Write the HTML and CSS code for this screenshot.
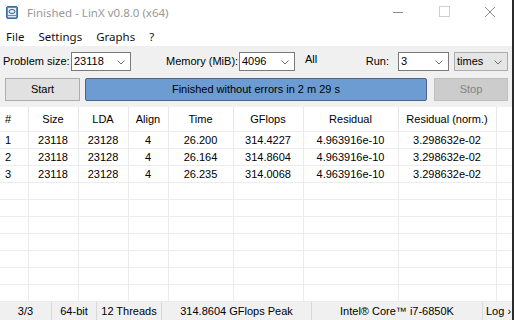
FILE: index.html
```html
<!DOCTYPE html>
<html lang="en">
<head>
  <meta charset="UTF-8">
  <title>Finished - LinX v0.8.0 (x64)</title>
  <link rel="stylesheet" href="styles.css">
</head>
<body>
  <div class="window">
    <div class="titlebar">
      <svg class="app-icon" width="12" height="13" viewBox="0 0 12 13">
        <rect x="0.5" y="0.5" width="11" height="12" rx="1.5" fill="#5d8ec4" stroke="#3b6aa0"/>
        <rect x="2" y="2" width="8" height="7" fill="#e6eef7"/>
        <ellipse cx="6" cy="5.5" rx="3" ry="2" fill="none" stroke="#2f5d93" stroke-width="1"/>
        <rect x="2" y="10" width="8" height="1.2" fill="#dbe6f2"/>
      </svg>
      <span class="title">Finished - LinX v0.8.0 (x64)</span>
      <div class="controls">
        <svg class="ctl" width="46" height="28" viewBox="0 0 46 28"><line x1="18" y1="12.5" x2="28" y2="12.5" stroke="#8a8a8a"/></svg>
        <svg class="ctl" width="46" height="28" viewBox="0 0 46 28"><rect x="18.5" y="6.5" width="10" height="10" fill="none" stroke="#cfcfcf"/></svg>
        <svg class="ctl" width="46" height="28" viewBox="0 0 46 28"><path d="M18 7 L28 17 M28 7 L18 17" stroke="#8a8a8a" stroke-width="1"/></svg>
      </div>
    </div>

    <div class="menubar">
      <span>File</span>
      <span>Settings</span>
      <span>Graphs</span>
      <span>?</span>
    </div>

    <div class="toolbar">
      <div class="row top">
        <span class="lbl lbl-size">Problem size:</span>
        <div class="combo combo-size">23118<svg class="chev" width="8" height="5" viewBox="0 0 8 5"><path d="M0.5 0.5 L4 4 L7.5 0.5" fill="none" stroke="#6f6f6f"/></svg></div>
        <span class="lbl lbl-mem">Memory (MiB):</span>
        <div class="combo combo-mem">4096<svg class="chev" width="8" height="5" viewBox="0 0 8 5"><path d="M0.5 0.5 L4 4 L7.5 0.5" fill="none" stroke="#6f6f6f"/></svg></div>
        <span class="lbl lbl-all">All</span>
        <span class="lbl lbl-run">Run:</span>
        <div class="combo combo-run">3<svg class="chev" width="8" height="5" viewBox="0 0 8 5"><path d="M0.5 0.5 L4 4 L7.5 0.5" fill="none" stroke="#6f6f6f"/></svg></div>
        <div class="combo combo-times">times<svg class="chev" width="8" height="5" viewBox="0 0 8 5"><path d="M0.5 0.5 L4 4 L7.5 0.5" fill="none" stroke="#6f6f6f"/></svg></div>
      </div>
      <div class="row bottom">
        <button class="btn btn-start">Start</button>
        <div class="progress">Finished without errors in 2 m 29 s</div>
        <button class="btn btn-stop" disabled>Stop</button>
      </div>
    </div>

    <table class="results">
      <colgroup>
        <col style="width:28px"><col style="width:50px"><col style="width:50px"><col style="width:40px">
        <col style="width:65px"><col style="width:70px"><col style="width:95px"><col style="width:98px"><col>
      </colgroup>
      <thead>
        <tr>
          <th class="num">#</th><th>Size</th><th>LDA</th><th>Align</th><th>Time</th><th>GFlops</th><th>Residual</th><th>Residual (norm.)</th><th></th>
        </tr>
      </thead>
      <tbody>
        <tr><td class="num">1</td><td>23118</td><td>23128</td><td>4</td><td>26.200</td><td>314.4227</td><td>4.963916e-10</td><td>3.298632e-02</td><td></td></tr>
        <tr><td class="num">2</td><td>23118</td><td>23128</td><td>4</td><td>26.164</td><td>314.8604</td><td>4.963916e-10</td><td>3.298632e-02</td><td></td></tr>
        <tr><td class="num">3</td><td>23118</td><td>23128</td><td>4</td><td>26.235</td><td>314.0068</td><td>4.963916e-10</td><td>3.298632e-02</td><td></td></tr>
        <tr><td></td><td></td><td></td><td></td><td></td><td></td><td></td><td></td><td></td></tr>
        <tr><td></td><td></td><td></td><td></td><td></td><td></td><td></td><td></td><td></td></tr>
        <tr><td></td><td></td><td></td><td></td><td></td><td></td><td></td><td></td><td></td></tr>
        <tr><td></td><td></td><td></td><td></td><td></td><td></td><td></td><td></td><td></td></tr>
        <tr><td></td><td></td><td></td><td></td><td></td><td></td><td></td><td></td><td></td></tr>
        <tr><td></td><td></td><td></td><td></td><td></td><td></td><td></td><td></td><td></td></tr>
        <tr><td></td><td></td><td></td><td></td><td></td><td></td><td></td><td></td><td></td></tr>
      </tbody>
    </table>

    <div class="statusbar">
      <span class="cell s-runs">3/3</span>
      <span class="cell s-bits">64-bit</span>
      <span class="cell s-threads">12 Threads</span>
      <span class="cell s-peak">314.8604 GFlops Peak</span>
      <span class="cell s-cpu">Intel® Core™ i7-6850K</span>
      <span class="cell s-log">Log ›</span>
    </div>
  </div>
</body>
</html>
```

FILE: styles.css
```css
html, body {
  margin: 0;
  padding: 0;
}

body {
  background: #2b2b2b;
  width: 514px;
  height: 320px;
  overflow: hidden;
}

.window {
  width: 512px;
  height: 320px;
  background: #fff;
  display: flex;
  flex-direction: column;
  font-family: 'Liberation Sans', Arial, sans-serif;
  font-size: 11px;
  color: #000;
}

/* title bar */
.titlebar {
  height: 28px;
  display: flex;
  align-items: center;
  position: relative;
}

.app-icon {
  margin-left: 6px;
  margin-top: -4px;
}

.title {
  margin-left: 9px;
  margin-top: -3px;
  font-family: 'Noto Sans', sans-serif;
  font-size: 11.5px;
  color: #999;
}

.controls {
  margin-left: auto;
  display: flex;
  align-self: flex-start;
  margin-right: -1px;
}

.ctl {
  display: block;
}

/* menu */
.menubar {
  height: 18px;
  display: flex;
  align-items: center;
  padding-left: 6px;
  gap: 14px;
  font-family: 'Noto Sans', sans-serif;
  font-size: 11.5px;
  color: #111;
}

/* toolbar */
.toolbar {
  background: #f0f0f0;
  height: 62px;
  box-sizing: border-box;
  padding-top: 6px;
}

.row {
  display: flex;
  align-items: center;
}

.row.top {
  height: 19px;
  padding-left: 3px;
}

.row.bottom {
  height: 23px;
  margin-top: 7px;
  padding-left: 5px;
  padding-right: 4px;
}

.lbl-size { width: 68px; }
.lbl-mem { margin-left: 35px; width: 73px; }
.lbl-all { margin-left: 10px; margin-top: -4px; }
.lbl-run { margin-left: auto; margin-right: 9px; }

.combo {
  height: 19px;
  box-sizing: border-box;
  border: 1px solid #7a7a7a;
  background: #fff;
  display: flex;
  align-items: center;
  padding-left: 2px;
  position: relative;
}

.chev {
  position: absolute;
  right: 5px;
  top: 7px;
}

.combo-size { width: 60px; }
.combo-mem { width: 56px; }
.combo-run { width: 51px; }
.combo-times { width: 54px; margin-left: 5px; margin-right: 4px; border-color: #adadad; background: #e5e5e5; }

.btn {
  height: 23px;
  box-sizing: border-box;
  font-family: inherit;
  font-size: 11px;
  padding: 0;
}

.btn-start {
  width: 75px;
  background: #e1e1e1;
  border: 1px solid #adadad;
  color: #000;
}

.btn-stop {
  width: 74px;
  margin-left: 7px;
  background: #cccccc;
  border: 1px solid #bfbfbf;
  color: #838383;
}

.progress {
  flex: 1;
  height: 23px;
  margin-left: 5px;
  box-sizing: border-box;
  border: 1px solid #4c6585;
  border-radius: 2px;
  background: #6c9cd2;
  display: flex;
  align-items: center;
  justify-content: center;
}

/* results table */
.results {
  border-collapse: collapse;
  table-layout: fixed;
  width: 512px;
}

.results th {
  height: 24px;
  padding: 0;
  font-weight: normal;
  text-align: center;
  border-right: 1px solid #e8e8e8;
  border-bottom: 1px solid #ececec;
}

.results td {
  height: 16px;
  padding: 0;
  text-align: center;
  border-right: 1px solid #ececec;
  border-bottom: 1px solid #ececec;
}

.results th:last-child,
.results td:last-child {
  border-right: none;
}

.results .num {
  text-align: left;
  padding-left: 5px;
}

/* status bar */
.statusbar {
  margin-top: auto;
  height: 18px;
  background: #f0f0f0;
  display: flex;
}

.cell {
  box-sizing: border-box;
  display: flex;
  align-items: center;
  justify-content: center;
  border-right: 1px solid #d9d9d9;
}

.s-runs { width: 52px; }
.s-bits { width: 45px; }
.s-threads { width: 65px; }
.s-peak { width: 150px; }
.s-cpu { width: 171px; }
.s-log { flex: 1; border-right: none; justify-content: flex-start; padding-left: 3px; }
```
